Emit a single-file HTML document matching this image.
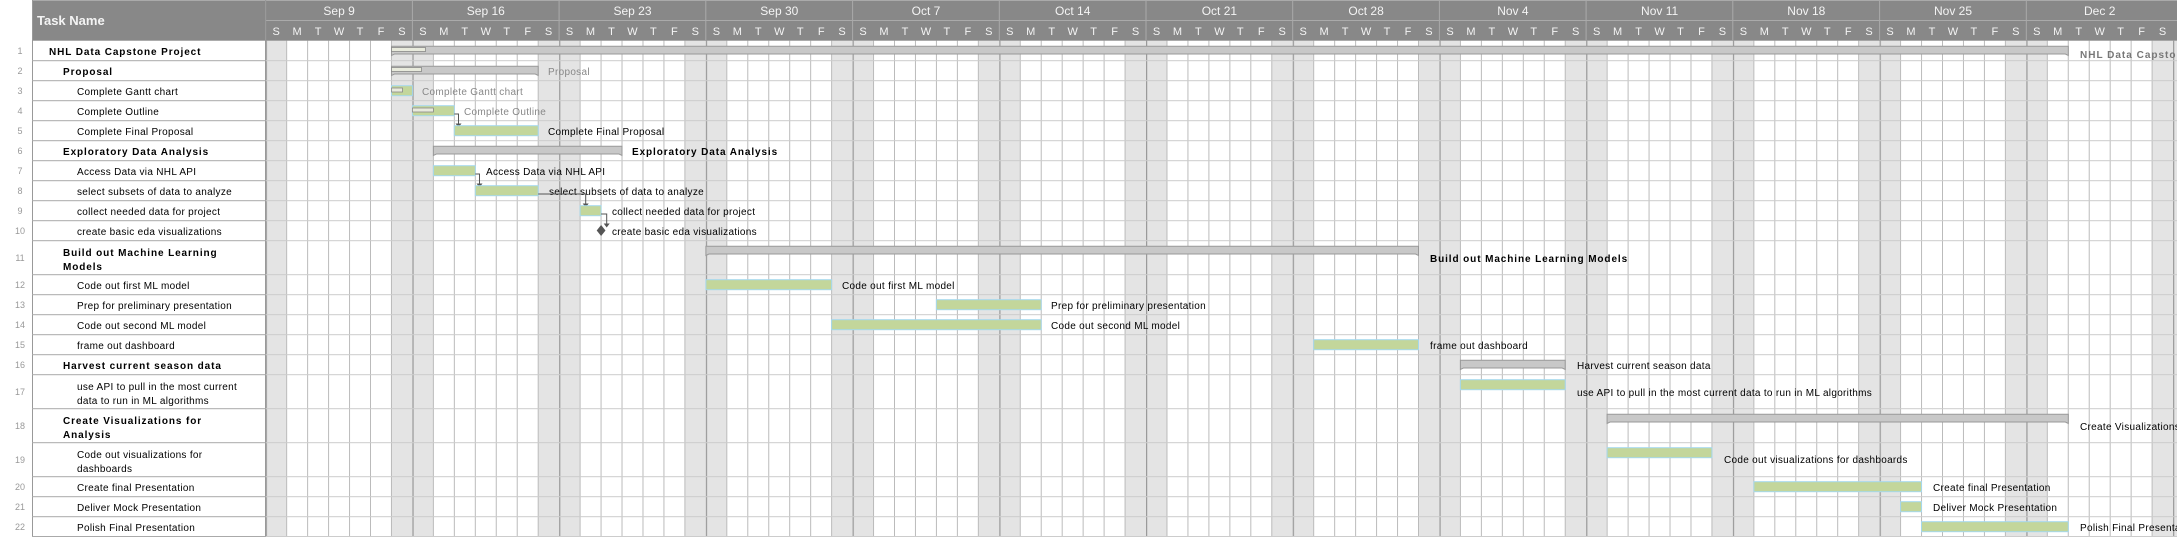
<!DOCTYPE html>
<html><head><meta charset="utf-8"><style>
html,body{margin:0;padding:0;background:#fff;}
svg{display:block;font-family:"Liberation Sans",sans-serif;}
.hd{fill:#f4f4f4;font-size:11px;text-anchor:middle;}
.mo{fill:#f4f4f4;font-size:12px;text-anchor:middle;}
.num{fill:#999;font-size:9px;text-anchor:middle;}
.t{fill:#000;font-size:10px;letter-spacing:0.3px;}
.b{fill:#000;font-size:10px;font-weight:bold;letter-spacing:0.9px;}
.g{fill:#888;font-size:10px;letter-spacing:0.3px;}
.lb{fill:#000;font-size:10px;letter-spacing:0.3px;}
.sb{fill:#c8c8c8;stroke:#999;stroke-width:1;}
.tb{fill:#c3d69b;stroke:#a5d8ec;stroke-width:1;}
.pr{fill:#e8eadc;stroke:#888;stroke-width:0.8;}
.ar{stroke:#555;stroke-width:1;fill:none;}
</style></head><body>
<svg width="2177" height="537" viewBox="0 0 2177 537" xmlns="http://www.w3.org/2000/svg">
<defs>
<pattern id="wk" x="265.7" y="0" width="146.72" height="537" patternUnits="userSpaceOnUse">
<rect x="0" y="0" width="146.72" height="537" fill="#fff"/>
<rect x="0" y="0" width="20.96" height="537" fill="#e4e4e4"/>
<rect x="125.76" y="0" width="20.96" height="537" fill="#e4e4e4"/>
<rect x="20.46" y="0" width="1" height="537" fill="#bbb"/>
<rect x="41.42" y="0" width="1" height="537" fill="#bbb"/>
<rect x="62.38" y="0" width="1" height="537" fill="#bbb"/>
<rect x="83.34" y="0" width="1" height="537" fill="#bbb"/>
<rect x="104.3" y="0" width="1" height="537" fill="#bbb"/>
<rect x="125.26" y="0" width="1" height="537" fill="#bbb"/>
<rect x="0" y="0" width="1.2" height="537" fill="#999"/>
</pattern>
</defs>
<rect x="0" y="0" width="2177" height="537" fill="#fff"/>
<rect x="265.7" y="40.7" width="1912" height="497" fill="url(#wk)"/>
<!-- header -->
<rect x="32" y="0" width="2145" height="40.7" fill="#888"/>
<rect x="32" y="0" width="2145" height="1" fill="#aaa"/>
<rect x="265.7" y="20" width="1912" height="1" fill="#aaa"/>
<rect x="32" y="0" width="1" height="537" fill="#999"/>
<rect x="265" y="0" width="1.2" height="537" fill="#999"/>
<text x="37" y="25" style="fill:#f4f4f4;font-size:13px;font-weight:bold;">Task Name</text>
<g fill="#aaa">
<rect x="411.9" y="0" width="1" height="40"/><rect x="558.6" y="0" width="1" height="40"/><rect x="705.3" y="0" width="1" height="40"/><rect x="852.1" y="0" width="1" height="40"/><rect x="998.8" y="0" width="1" height="40"/><rect x="1145.5" y="0" width="1" height="40"/><rect x="1292.2" y="0" width="1" height="40"/><rect x="1438.9" y="0" width="1" height="40"/><rect x="1585.6" y="0" width="1" height="40"/><rect x="1732.3" y="0" width="1" height="40"/><rect x="1879.1" y="0" width="1" height="40"/><rect x="2025.8" y="0" width="1" height="40"/>
</g>
<g id="hdrs">
<g transform="translate(265.7,0)"><text class="mo" x="73.4" y="15">Sep 9</text><text class="hd" x="10.5" y="35">S</text><text class="hd" x="31.4" y="35">M</text><text class="hd" x="52.4" y="35">T</text><text class="hd" x="73.4" y="35">W</text><text class="hd" x="94.3" y="35">T</text><text class="hd" x="115.3" y="35">F</text><text class="hd" x="136.2" y="35">S</text></g>
<g transform="translate(412.4,0)"><text class="mo" x="73.4" y="15">Sep 16</text><text class="hd" x="10.5" y="35">S</text><text class="hd" x="31.4" y="35">M</text><text class="hd" x="52.4" y="35">T</text><text class="hd" x="73.4" y="35">W</text><text class="hd" x="94.3" y="35">T</text><text class="hd" x="115.3" y="35">F</text><text class="hd" x="136.2" y="35">S</text></g>
<g transform="translate(559.1,0)"><text class="mo" x="73.4" y="15">Sep 23</text><text class="hd" x="10.5" y="35">S</text><text class="hd" x="31.4" y="35">M</text><text class="hd" x="52.4" y="35">T</text><text class="hd" x="73.4" y="35">W</text><text class="hd" x="94.3" y="35">T</text><text class="hd" x="115.3" y="35">F</text><text class="hd" x="136.2" y="35">S</text></g>
<g transform="translate(705.9,0)"><text class="mo" x="73.4" y="15">Sep 30</text><text class="hd" x="10.5" y="35">S</text><text class="hd" x="31.4" y="35">M</text><text class="hd" x="52.4" y="35">T</text><text class="hd" x="73.4" y="35">W</text><text class="hd" x="94.3" y="35">T</text><text class="hd" x="115.3" y="35">F</text><text class="hd" x="136.2" y="35">S</text></g>
<g transform="translate(852.6,0)"><text class="mo" x="73.4" y="15">Oct 7</text><text class="hd" x="10.5" y="35">S</text><text class="hd" x="31.4" y="35">M</text><text class="hd" x="52.4" y="35">T</text><text class="hd" x="73.4" y="35">W</text><text class="hd" x="94.3" y="35">T</text><text class="hd" x="115.3" y="35">F</text><text class="hd" x="136.2" y="35">S</text></g>
<g transform="translate(999.3,0)"><text class="mo" x="73.4" y="15">Oct 14</text><text class="hd" x="10.5" y="35">S</text><text class="hd" x="31.4" y="35">M</text><text class="hd" x="52.4" y="35">T</text><text class="hd" x="73.4" y="35">W</text><text class="hd" x="94.3" y="35">T</text><text class="hd" x="115.3" y="35">F</text><text class="hd" x="136.2" y="35">S</text></g>
<g transform="translate(1146.0,0)"><text class="mo" x="73.4" y="15">Oct 21</text><text class="hd" x="10.5" y="35">S</text><text class="hd" x="31.4" y="35">M</text><text class="hd" x="52.4" y="35">T</text><text class="hd" x="73.4" y="35">W</text><text class="hd" x="94.3" y="35">T</text><text class="hd" x="115.3" y="35">F</text><text class="hd" x="136.2" y="35">S</text></g>
<g transform="translate(1292.7,0)"><text class="mo" x="73.4" y="15">Oct 28</text><text class="hd" x="10.5" y="35">S</text><text class="hd" x="31.4" y="35">M</text><text class="hd" x="52.4" y="35">T</text><text class="hd" x="73.4" y="35">W</text><text class="hd" x="94.3" y="35">T</text><text class="hd" x="115.3" y="35">F</text><text class="hd" x="136.2" y="35">S</text></g>
<g transform="translate(1439.5,0)"><text class="mo" x="73.4" y="15">Nov 4</text><text class="hd" x="10.5" y="35">S</text><text class="hd" x="31.4" y="35">M</text><text class="hd" x="52.4" y="35">T</text><text class="hd" x="73.4" y="35">W</text><text class="hd" x="94.3" y="35">T</text><text class="hd" x="115.3" y="35">F</text><text class="hd" x="136.2" y="35">S</text></g>
<g transform="translate(1586.2,0)"><text class="mo" x="73.4" y="15">Nov 11</text><text class="hd" x="10.5" y="35">S</text><text class="hd" x="31.4" y="35">M</text><text class="hd" x="52.4" y="35">T</text><text class="hd" x="73.4" y="35">W</text><text class="hd" x="94.3" y="35">T</text><text class="hd" x="115.3" y="35">F</text><text class="hd" x="136.2" y="35">S</text></g>
<g transform="translate(1732.9,0)"><text class="mo" x="73.4" y="15">Nov 18</text><text class="hd" x="10.5" y="35">S</text><text class="hd" x="31.4" y="35">M</text><text class="hd" x="52.4" y="35">T</text><text class="hd" x="73.4" y="35">W</text><text class="hd" x="94.3" y="35">T</text><text class="hd" x="115.3" y="35">F</text><text class="hd" x="136.2" y="35">S</text></g>
<g transform="translate(1879.6,0)"><text class="mo" x="73.4" y="15">Nov 25</text><text class="hd" x="10.5" y="35">S</text><text class="hd" x="31.4" y="35">M</text><text class="hd" x="52.4" y="35">T</text><text class="hd" x="73.4" y="35">W</text><text class="hd" x="94.3" y="35">T</text><text class="hd" x="115.3" y="35">F</text><text class="hd" x="136.2" y="35">S</text></g>
<g transform="translate(2026.3,0)"><text class="mo" x="73.4" y="15">Dec 2</text><text class="hd" x="10.5" y="35">S</text><text class="hd" x="31.4" y="35">M</text><text class="hd" x="52.4" y="35">T</text><text class="hd" x="73.4" y="35">W</text><text class="hd" x="94.3" y="35">T</text><text class="hd" x="115.3" y="35">F</text><text class="hd" x="136.2" y="35">S</text></g>
</g>
<!-- row lines -->
<g>
<g fill="#aaa">
<rect x="32" y="60.2" width="234" height="1"/><rect x="32" y="80.2" width="234" height="1"/><rect x="32" y="100.2" width="234" height="1"/><rect x="32" y="120.2" width="234" height="1"/><rect x="32" y="140.2" width="234" height="1"/><rect x="32" y="160.2" width="234" height="1"/><rect x="32" y="180.2" width="234" height="1"/><rect x="32" y="200.2" width="234" height="1"/><rect x="32" y="220.2" width="234" height="1"/><rect x="32" y="240.2" width="234" height="1"/><rect x="32" y="274.2" width="234" height="1"/><rect x="32" y="294.2" width="234" height="1"/><rect x="32" y="314.2" width="234" height="1"/><rect x="32" y="334.2" width="234" height="1"/><rect x="32" y="354.2" width="234" height="1"/><rect x="32" y="374.2" width="234" height="1"/><rect x="32" y="408.2" width="234" height="1"/><rect x="32" y="442.2" width="234" height="1"/><rect x="32" y="476.2" width="234" height="1"/><rect x="32" y="496.2" width="234" height="1"/><rect x="32" y="516.2" width="234" height="1"/><rect x="32" y="536" width="234" height="1"/>
</g>
<g fill="#ccc">
<rect x="266" y="60.2" width="1911" height="1"/><rect x="266" y="80.2" width="1911" height="1"/><rect x="266" y="100.2" width="1911" height="1"/><rect x="266" y="120.2" width="1911" height="1"/><rect x="266" y="140.2" width="1911" height="1"/><rect x="266" y="160.2" width="1911" height="1"/><rect x="266" y="180.2" width="1911" height="1"/><rect x="266" y="200.2" width="1911" height="1"/><rect x="266" y="220.2" width="1911" height="1"/><rect x="266" y="240.2" width="1911" height="1"/><rect x="266" y="274.2" width="1911" height="1"/><rect x="266" y="294.2" width="1911" height="1"/><rect x="266" y="314.2" width="1911" height="1"/><rect x="266" y="334.2" width="1911" height="1"/><rect x="266" y="354.2" width="1911" height="1"/><rect x="266" y="374.2" width="1911" height="1"/><rect x="266" y="408.2" width="1911" height="1"/><rect x="266" y="442.2" width="1911" height="1"/><rect x="266" y="476.2" width="1911" height="1"/><rect x="266" y="496.2" width="1911" height="1"/><rect x="266" y="516.2" width="1911" height="1"/><rect x="266" y="536" width="1911" height="1"/>
</g>
</g>
<!-- left table text -->
<text class="num" x="20" y="54">1</text><text class="b" x="49" y="55">NHL Data Capstone Project</text>
<text class="num" x="20" y="74">2</text><text class="b" x="63" y="75">Proposal</text>
<text class="num" x="20" y="94">3</text><text class="t" x="77" y="95">Complete Gantt chart</text>
<text class="num" x="20" y="114">4</text><text class="t" x="77" y="115">Complete Outline</text>
<text class="num" x="20" y="134">5</text><text class="t" x="77" y="135">Complete Final Proposal</text>
<text class="num" x="20" y="154">6</text><text class="b" x="63" y="155">Exploratory Data Analysis</text>
<text class="num" x="20" y="174">7</text><text class="t" x="77" y="175">Access Data via NHL API</text>
<text class="num" x="20" y="194">8</text><text class="t" x="77" y="195">select subsets of data to analyze</text>
<text class="num" x="20" y="214">9</text><text class="t" x="77" y="215">collect needed data for project</text>
<text class="num" x="20" y="234">10</text><text class="t" x="77" y="235">create basic eda visualizations</text>
<text class="num" x="20" y="261">11</text><text class="b" x="63" y="256">Build out Machine Learning</text><text class="b" x="63" y="270">Models</text>
<text class="num" x="20" y="288">12</text><text class="t" x="77" y="289">Code out first ML model</text>
<text class="num" x="20" y="308">13</text><text class="t" x="77" y="309">Prep for preliminary presentation</text>
<text class="num" x="20" y="328">14</text><text class="t" x="77" y="329">Code out second ML model</text>
<text class="num" x="20" y="348">15</text><text class="t" x="77" y="349">frame out dashboard</text>
<text class="num" x="20" y="368">16</text><text class="b" x="63" y="369">Harvest current season data</text>
<text class="num" x="20" y="395">17</text><text class="t" x="77" y="390">use API to pull in the most current</text><text class="t" x="77" y="404">data to run in ML algorithms</text>
<text class="num" x="20" y="429">18</text><text class="b" x="63" y="424">Create Visualizations for</text><text class="b" x="63" y="438">Analysis</text>
<text class="num" x="20" y="463">19</text><text class="t" x="77" y="458">Code out visualizations for</text><text class="t" x="77" y="472">dashboards</text>
<text class="num" x="20" y="490">20</text><text class="t" x="77" y="491">Create final Presentation</text>
<text class="num" x="20" y="510">21</text><text class="t" x="77" y="511">Deliver Mock Presentation</text>
<text class="num" x="20" y="530">22</text><text class="t" x="77" y="531">Polish Final Presentation</text>
<!-- bars -->
<path class="sb" d="M391.5,46.2H2068.3V55.5L2065.3,54H394.5L391.5,55.5Z"/>
<rect class="pr" x="391.5" y="47.5" width="34" height="4"/>
<text x="2080" y="58" style="fill:#777;font-size:10px;font-weight:bold;letter-spacing:1px;">NHL Data Capstone Project</text>
<path class="sb" d="M391.5,66.2H538.2V75.5L535.2,74H394.5L391.5,75.5Z"/>
<rect class="pr" x="391.5" y="67.5" width="30" height="4"/>
<text class="g" x="548" y="75">Proposal</text>
<rect class="tb" x="391.5" y="85.7" width="20.9" height="10"/>
<rect class="pr" x="391.5" y="88" width="11" height="4"/>
<text class="g" x="422" y="95">Complete Gantt chart</text>
<rect class="tb" x="412.4" y="105.7" width="41.9" height="10"/>
<rect class="pr" x="412.4" y="108" width="21" height="4"/>
<text class="g" x="464" y="115">Complete Outline</text>
<path class="ar" d="M454.3,114H458.5V125"/><path d="M455.5,123.5H461.5L458.5,127.5Z" fill="#555"/>
<rect class="tb" x="454.3" y="125.7" width="83.9" height="10"/>
<text class="lb" x="548" y="135">Complete Final Proposal</text>
<path class="sb" d="M433.4,146.2H622V155.5L619,154H436.4L433.4,155.5Z"/>
<text class="b" x="632" y="155">Exploratory Data Analysis</text>
<rect class="tb" x="433.4" y="165.7" width="41.9" height="10"/>
<path class="ar" d="M475.3,174H479.5V185"/><path d="M476.5,183.5H482.5L479.5,187.5Z" fill="#555"/>
<text class="lb" x="486" y="175">Access Data via NHL API</text>
<rect class="tb" x="475.3" y="185.7" width="62.9" height="10"/>
<text class="lb" x="549" y="195">select subsets of data to analyze</text>
<path class="ar" d="M538.2,194H585.7V205"/><path d="M582.7,203.5H588.7L585.7,207.5Z" fill="#555"/>
<rect class="tb" x="580.1" y="205.7" width="21" height="10"/>
<text class="lb" x="612" y="215">collect needed data for project</text>
<path class="ar" d="M601.1,214H606.7V225"/><path d="M603.7,223.5H609.7L606.7,227.5Z" fill="#555"/>
<path d="M601.1,225L605.5,230.5L601.1,236L596.7,230.5Z" fill="#555"/>
<text class="lb" x="612" y="235">create basic eda visualizations</text>
<path class="sb" d="M705.9,246.2H1418.5V255.5L1415.5,254H708.9L705.9,255.5Z"/>
<text class="b" x="1430" y="262">Build out Machine Learning Models</text>
<rect class="tb" x="705.9" y="279.7" width="125.7" height="10"/>
<text class="lb" x="842" y="289">Code out first ML model</text>
<rect class="tb" x="936.4" y="299.7" width="104.8" height="10"/>
<text class="lb" x="1051" y="309">Prep for preliminary presentation</text>
<rect class="tb" x="831.6" y="319.7" width="209.6" height="10"/>
<text class="lb" x="1051" y="329">Code out second ML model</text>
<rect class="tb" x="1313.7" y="339.7" width="104.8" height="10"/>
<text class="lb" x="1430" y="349">frame out dashboard</text>
<path class="sb" d="M1460.4,360.2H1565.2V369.5L1562.2,368H1463.4L1460.4,369.5Z"/>
<text class="lb" x="1577" y="369">Harvest current season data</text>
<rect class="tb" x="1460.4" y="379.7" width="104.8" height="10"/>
<text class="lb" x="1577" y="396">use API to pull in the most current data to run in ML algorithms</text>
<path class="sb" d="M1607.1,414.2H2068.3V423.5L2065.3,422H1610.1L1607.1,423.5Z"/>
<text class="lb" x="2080" y="430">Create Visualizations for Analysis</text>
<rect class="tb" x="1607.1" y="447.7" width="104.8" height="10"/>
<text class="lb" x="1724" y="463">Code out visualizations for dashboards</text>
<rect class="tb" x="1753.9" y="481.7" width="167.6" height="10"/>
<text class="lb" x="1933" y="491">Create final Presentation</text>
<rect class="tb" x="1900.6" y="501.7" width="20.9" height="10"/>
<text class="lb" x="1933" y="511">Deliver Mock Presentation</text>
<rect class="tb" x="1921.5" y="521.7" width="146.8" height="10"/>
<text class="lb" x="2080" y="531">Polish Final Presentation</text>
</svg>
</body></html>
